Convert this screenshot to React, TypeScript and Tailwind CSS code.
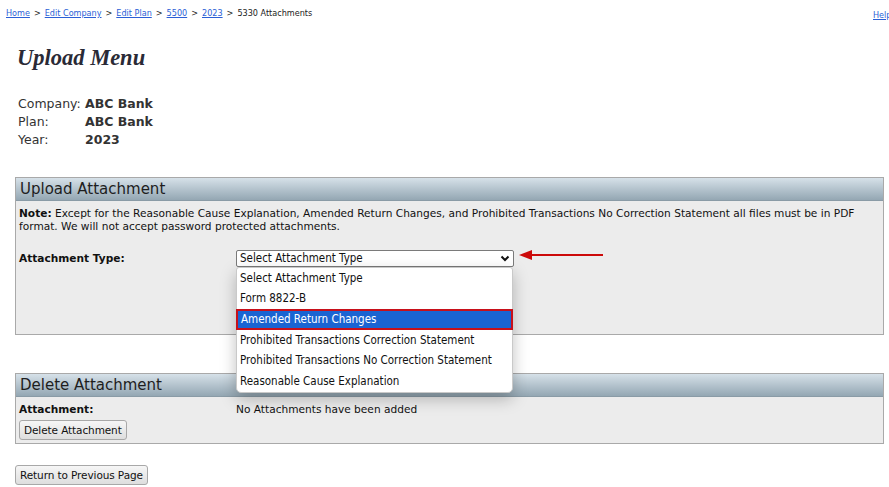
import React from "react";

const verdana = "font-['DejaVu_Sans',Verdana,sans-serif]";

const options = [
  "Select Attachment Type",
  "Form 8822-B",
  "Amended Return Changes",
  "Prohibited Transactions Correction Statement",
  "Prohibited Transactions No Correction Statement",
  "Reasonable Cause Explanation",
];

function PanelHeader({ title }: { title: string }) {
  return (
    <div className="h-[23px] flex items-center px-[4px] border-b border-[#8a9ba6] bg-gradient-to-b from-[#d6e1e9] to-[#94a7b3] text-[15px] text-[#1e1e1e] leading-none">
      {title}
    </div>
  );
}

function GrayButton({ children, className }: { children: React.ReactNode; className?: string }) {
  return (
    <button
      className={`h-[20px] px-[4px] rounded-[3px] border border-[#a8a8a8] bg-gradient-to-b from-[#f6f6f6] to-[#dedede] text-[10.5px] tracking-[-0.1px] text-[#111] leading-none ${className ?? ""}`}
    >
      {children}
    </button>
  );
}

function Arrow() {
  return (
    <svg width="86" height="12" viewBox="0 0 86 12" className="absolute left-[519px] top-[249px]">
      <line x1="10" y1="6" x2="84" y2="6" stroke="#cc0a0a" strokeWidth="2.2" />
      <polygon points="0,6 13,1 13,11" fill="#cc0a0a" />
    </svg>
  );
}

export default function App() {
  return (
    <div className={`relative w-[889px] h-[487px] overflow-hidden bg-white ${verdana} text-[#222]`}>
      {/* breadcrumb bar */}
      <div className="relative h-[27px] pt-[7px] pl-[6px] text-[9px] leading-[12px] flex gap-[4px] font-['DejaVu_Sans_Condensed','DejaVu_Sans',sans-serif]">
        <a href="#" className="text-[#2b5fd6] underline">Home</a>
        <span>&gt;</span>
        <a href="#" className="text-[#2b5fd6] underline">Edit Company</a>
        <span>&gt;</span>
        <a href="#" className="text-[#2b5fd6] underline">Edit Plan</a>
        <span>&gt;</span>
        <a href="#" className="text-[#2b5fd6] underline">5500</a>
        <span>&gt;</span>
        <a href="#" className="text-[#2b5fd6] underline">2023</a>
        <span>&gt;</span>
        <span>5330 Attachments</span>
        <a href="#" className="absolute left-[873px] top-[9px] text-[#2b5fd6] underline">Help</a>
      </div>

      <div className="pl-[15px] w-[869px] box-content">
        <h1 className="pl-[2px] mt-[17px] text-[22.5px] leading-[28px] italic font-bold font-['Liberation_Serif',serif] text-[#2a2a36]">
          Upload Menu
        </h1>

        <div className="mt-[23px] pl-[3px] grid grid-cols-[67px_1fr] text-[12.5px] leading-[18px] text-[#333]">
          <span>Company:</span>
          <span className="font-bold">ABC Bank</span>
          <span>Plan:</span>
          <span className="font-bold">ABC Bank</span>
          <span>Year:</span>
          <span className="font-bold">2023</span>
        </div>

        {/* upload panel */}
        <div className="mt-[28px] border border-[#a9a9a9] bg-[#ececec]">
          <PanelHeader title="Upload Attachment" />
          <div className="px-[3px] pt-[6px] h-[133px] text-[10.6px] leading-[13px] text-[#111]">
            <p>
              <b>Note:</b>{" "}Except for the Reasonable Cause Explanation, Amended Return Changes, and Prohibited
              Transactions No Correction Statement all files must be in PDF format. We will not accept password
              protected attachments.
            </p>
            <div className="mt-[17px] grid grid-cols-[217px_1fr] items-center">
              <span className="font-bold">Attachment Type:</span>
              <div className="w-[278px] h-[17px] rounded-[2px] border border-[#7a7a7a] bg-white flex items-center justify-between pl-[3px] pr-[3px]">
                <span className="font-['DejaVu_Sans_Condensed','DejaVu_Sans',sans-serif] text-[11.5px]">Select Attachment Type</span>
                <svg width="10" height="7" viewBox="0 0 10 7">
                  <path d="M1.5 1.5 L5 5 L8.5 1.5" fill="none" stroke="#111" strokeWidth="2" />
                </svg>
              </div>
            </div>
          </div>
        </div>

        {/* delete panel */}
        <div className="mt-[38px] border border-[#a9a9a9] bg-[#ececec]">
          <PanelHeader title="Delete Attachment" />
          <div className="px-[3px] pt-[6px] pb-[3px] text-[10.6px] leading-[13px] text-[#111]">
            <div className="grid grid-cols-[217px_1fr]">
              <span className="font-bold">Attachment:</span>
              <span>No Attachments have been added</span>
            </div>
            <GrayButton className="mt-[4px]">Delete Attachment</GrayButton>
          </div>
        </div>

        <GrayButton className="mt-[21px]">Return to Previous Page</GrayButton>
      </div>

      {/* open select list */}
      <div className="absolute left-[236px] top-[267px] w-[277px] bg-white rounded-b-[5px] rounded-t-[3px] border border-[#c9c9c9] shadow-[0_6px_16px_rgba(0,0,0,0.25)] text-[11.5px] text-[#111] font-['DejaVu_Sans_Condensed','DejaVu_Sans',sans-serif]">
        {options.map((o) => (
          <div
            key={o}
            className={
              o === "Amended Return Changes"
                ? "h-[21px] flex items-center pl-[3px] -mx-[1px] bg-[#1a64d2] text-white border-2 border-[#c8101a]"
                : "h-[20.6px] flex items-center pl-[3px]"
            }
          >
            {o}
          </div>
        ))}
      </div>

      <Arrow />
    </div>
  );
}
